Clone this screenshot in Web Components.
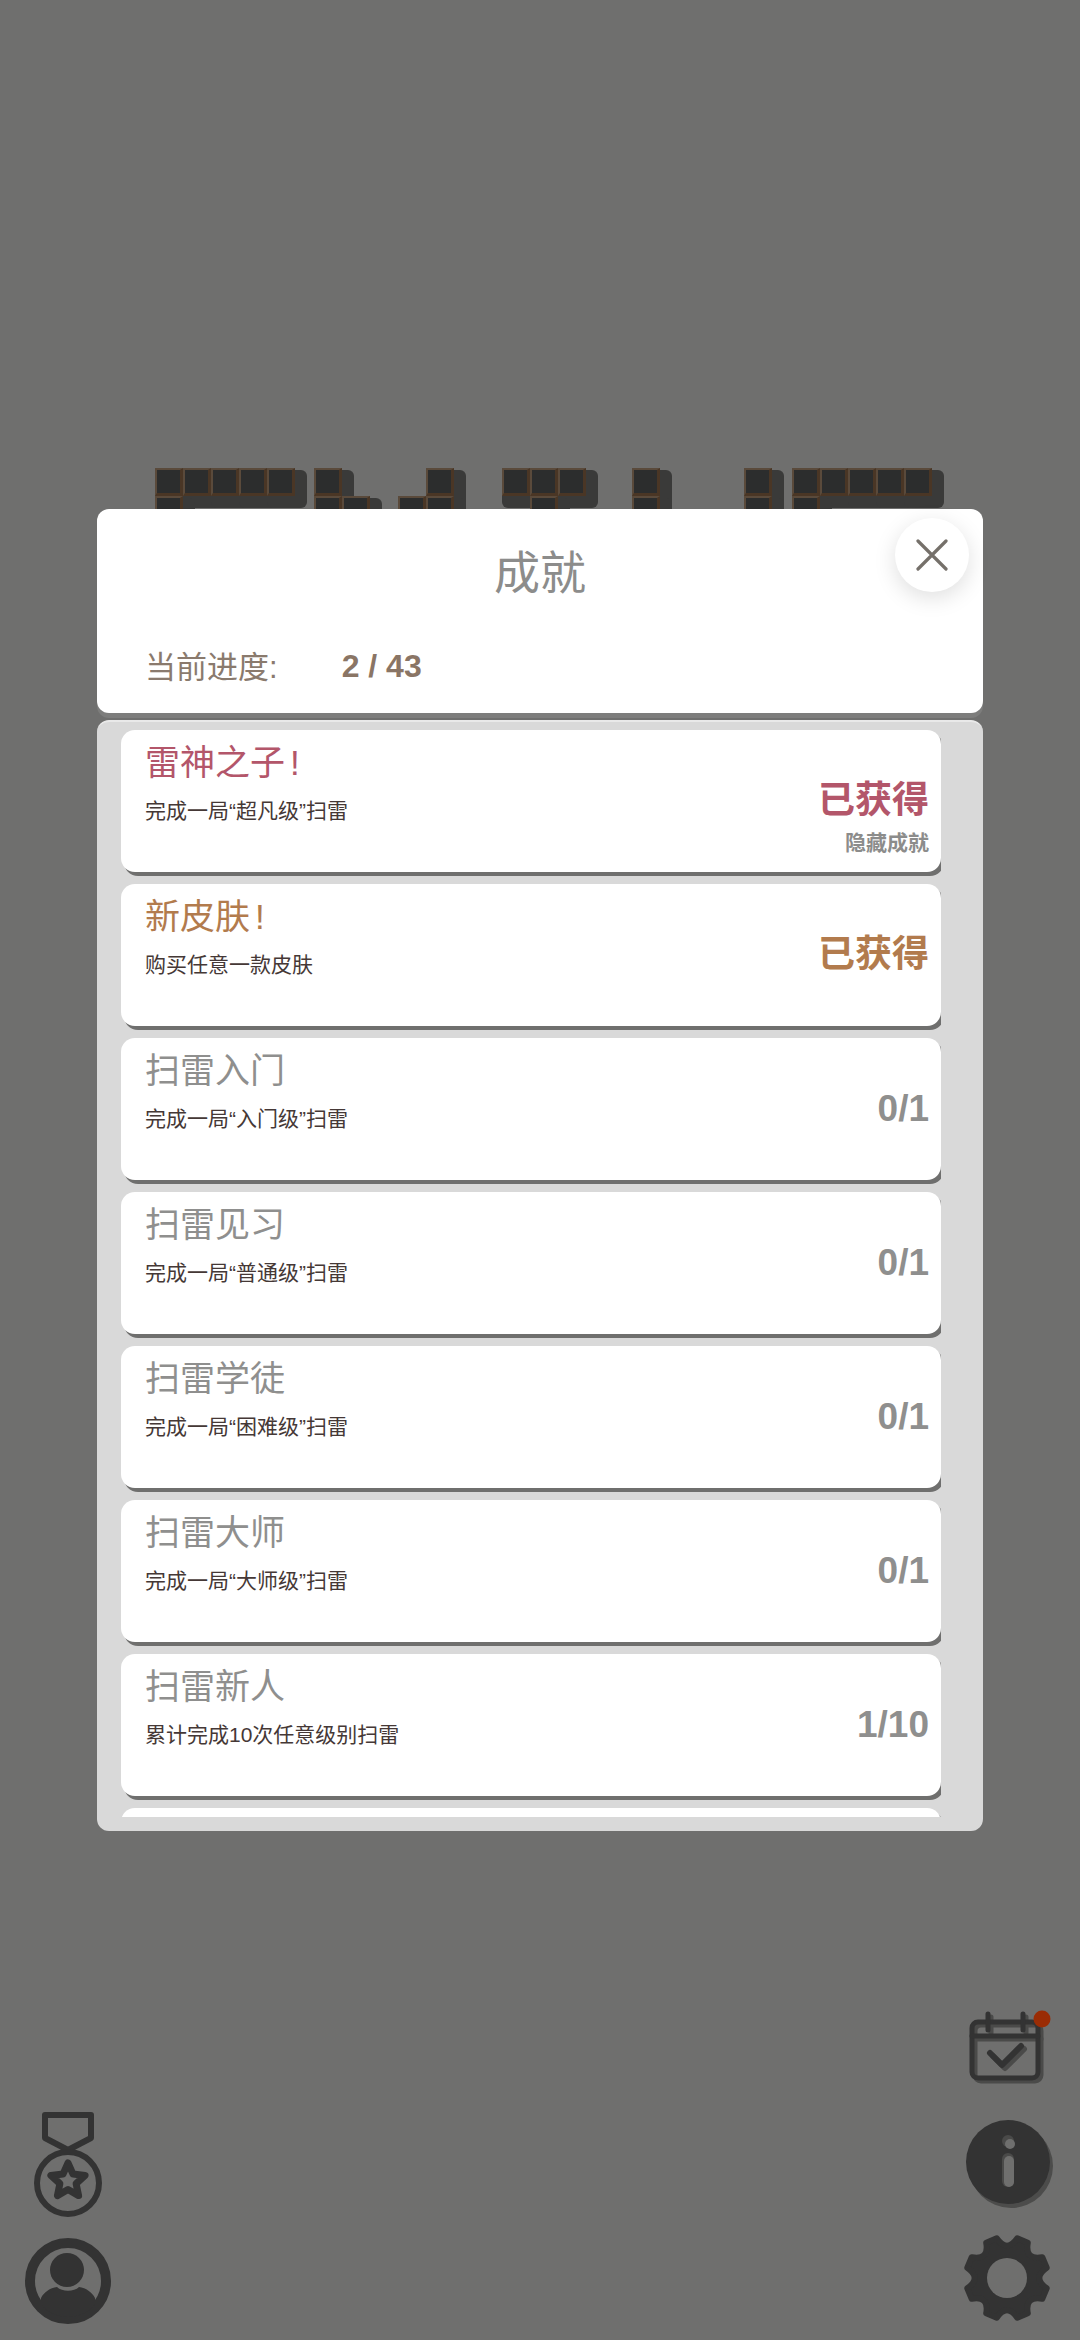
<!DOCTYPE html>
<html lang="zh">
<head>
<meta charset="utf-8">
<title>成就</title>
<style>
  html, body { margin: 0; padding: 0; background: #6f6f6e; }
  body { font-family: "Liberation Sans", "Noto Sans CJK SC", sans-serif; }
</style>
</head>
<body>
<game-screen>
  <title-blocks slot="title"></title-blocks>
  <achievement-dialog slot="dialog" current="2 / 43">
    <achievement-card tone="red" name="雷神之子!" desc="完成一局“超凡级”扫雷" status="已获得" note="隐藏成就"></achievement-card>
    <achievement-card tone="orange" name="新皮肤!" desc="购买任意一款皮肤" status="已获得"></achievement-card>
    <achievement-card name="扫雷入门" desc="完成一局“入门级”扫雷" status="0/1"></achievement-card>
    <achievement-card name="扫雷见习" desc="完成一局“普通级”扫雷" status="0/1"></achievement-card>
    <achievement-card name="扫雷学徒" desc="完成一局“困难级”扫雷" status="0/1"></achievement-card>
    <achievement-card name="扫雷大师" desc="完成一局“大师级”扫雷" status="0/1"></achievement-card>
    <achievement-card name="扫雷新人" desc="累计完成10次任意级别扫雷" status="1/10"></achievement-card>
    <achievement-card></achievement-card>
  </achievement-dialog>
  <hud-icon slot="left" name="medal"></hud-icon>
  <hud-icon slot="left" name="profile"></hud-icon>
  <hud-icon slot="right" name="calendar"></hud-icon>
  <hud-icon slot="right" name="info"></hud-icon>
  <hud-icon slot="right" name="gear"></hud-icon>
</game-screen>

<script>
/**
 * Full window screen: title at the top, HUD icons at the bottom, dialog over it
 */
class GameScreen extends HTMLElement {
  constructor() {
    super();
    this.attachShadow({ mode: 'open' });
    this.shadowRoot.innerHTML = `
      <style>
        :host {
          display: flex;
          flex-direction: column;
          justify-content: space-between;
          position: relative;
          width: 1080px;
          height: 2340px;
          overflow: hidden;
          background: #6f6f6e;
        }
        .hud {
          display: flex;
          justify-content: space-between;
          align-items: flex-end;
          padding: 0 24px 15px;
        }
        .column {
          display: flex;
          flex-direction: column;
          align-items: center;
        }
      </style>
      <slot name="title"></slot>
      <slot name="dialog"></slot>
      <div class="hud">
        <div class="column"><slot name="left"></slot></div>
        <div class="column"><slot name="right"></slot></div>
      </div>
    `;
  }
}

// Left edge of each block group, and the cells as [col, row]
const TITLE_GROUPS = [
  { x: 155, cells: [[0, 0], [1, 0], [2, 0], [3, 0], [4, 0], [0, 1]] },
  { x: 314, cells: [[0, 0], [0, 1], [1, 1]] },
  { x: 398, cells: [[1, 0], [0, 1], [1, 1]] },
  { x: 502, cells: [[0, 0], [1, 0], [2, 0], [1, 1]] },
  { x: 632, cells: [[0, 0], [0, 1]] },
  { x: 744, cells: [[0, 0], [0, 1]] },
  { x: 792, cells: [[0, 0], [1, 0], [2, 0], [3, 0], [4, 0], [0, 1]] },
];

/**
 * The block letters of the game title, mostly hidden behind the dialog
 */
class TitleBlocks extends HTMLElement {
  constructor() {
    super();
    this.attachShadow({ mode: 'open' });
    let shadows = '';
    let cells = '';
    for (const group of TITLE_GROUPS) {
      for (const [col, row] of group.cells) {
        const left = group.x + col * 28;
        const top = row * 28;
        shadows += `<i class="shade" style="left:${left}px;top:${top + 2}px"></i>`;
        cells += `<i class="cell" style="left:${left}px;top:${top}px"></i>`;
      }
    }
    this.shadowRoot.innerHTML = `
      <style>
        :host {
          display: block;
          position: relative;
          height: 80px;
          margin-top: 468px;
        }
        i { position: absolute; display: block; box-sizing: border-box; }
        .shade {
          width: 40px;
          height: 38px;
          border-radius: 6px;
          background: #3a3a39;
        }
        .cell {
          width: 28px;
          height: 28px;
          background: #2c2d2d;
          border-style: solid;
          border-width: 2px 3px 3px 2px;
          border-color: #5a4a3b #4a3625 #4a3625 #5a4a3b;
        }
      </style>
      ${shadows}${cells}
    `;
  }
}

/**
 * Achievements dialog, the cards are passed through the default slot
 */
class AchievementDialog extends HTMLElement {
  constructor() {
    super();
    this.attachShadow({ mode: 'open' });
    const current = this.getAttribute('current') || '';
    this.shadowRoot.innerHTML = `
      <style>
        :host {
          display: flex;
          flex-direction: column;
          position: absolute;
          left: 97px;
          top: 509px;
          width: 886px;
          height: 1322px;
        }
        .head {
          position: relative;
          box-sizing: border-box;
          height: 204px;
          flex: none;
          background: #fff;
          border-radius: 12px;
          box-shadow: 0 5px 0 #7d7d7c;
        }
        h1 {
          margin: 0;
          padding-top: 29px;
          text-align: center;
          font-size: 46px;
          line-height: 70px;
          font-weight: 400;
          color: #8c8c8b;
        }
        .progress {
          display: flex;
          align-items: center;
          margin-top: 32px;
          padding-left: 48px;
          height: 44px;
          color: #8a7a6d;
          font-size: 31px;
        }
        .progress span { margin-top: 4px; }
        .progress b { margin-left: 64px; margin-top: 8px; font-size: 32px; color: #8a7565; }
        .close {
          position: absolute;
          right: 14px;
          top: 9px;
          width: 74px;
          height: 74px;
          border-radius: 50%;
          background: #fff;
          box-shadow: 0 6px 22px rgba(0, 0, 0, 0.13);
          display: flex;
          align-items: center;
          justify-content: center;
        }
        .panel {
          flex: 1;
          min-height: 0;
          margin-top: 7px;
          box-sizing: border-box;
          padding: 8px 42px 14px 24px;
          background: #d9d9d9;
          border-top: 2px solid #e9e9e9;
          border-radius: 12px;
        }
        .list {
          display: flex;
          flex-direction: column;
          gap: 12px;
          height: 100%;
          overflow: hidden;
        }
      </style>
      <div class="head">
        <h1>成就</h1>
        <div class="progress"><span>当前进度:</span><b>${current}</b></div>
        <div class="close">
          <svg width="32" height="32" viewBox="0 0 32 32" fill="none" stroke="#75706a" stroke-width="3.2" stroke-linecap="round">
            <path d="M2 2 L30 30 M30 2 L2 30"/>
          </svg>
        </div>
      </div>
      <div class="panel"><div class="list"><slot></slot></div></div>
    `;
  }
}

const CARD_TONES = {
  red: '#b3566a',
  orange: '#b27b4d',
  gray: '#8f8f8e',
};

/**
 * One row of the achievements list
 */
class AchievementCard extends HTMLElement {
  constructor() {
    super();
    this.attachShadow({ mode: 'open' });
    const tone = CARD_TONES[this.getAttribute('tone')] || CARD_TONES.gray;
    // The exclamation mark sits a little away from the last character
    const name = (this.getAttribute('name') || '').replace('!', '<span class="bang">!</span>');
    const desc = this.getAttribute('desc') || '';
    const status = this.getAttribute('status') || '';
    const note = this.getAttribute('note');
    this.shadowRoot.innerHTML = `
      <style>
        :host {
          display: flex;
          flex: none;
          align-items: center;
          justify-content: space-between;
          position: relative;
          box-sizing: border-box;
          width: 820px;
          height: 142px;
          padding: 0 12px 0 24px;
          background: #fff;
          border-radius: 14px;
          box-shadow: 3px 4px 0 #6f6f6e;
        }
        .main { align-self: flex-start; padding-top: 8px; }
        .name { font-size: 35px; line-height: 50px; color: ${tone}; }
        .bang { margin-left: 5px; }
        .desc { margin-top: 7px; font-size: 21px; line-height: 32px; color: #453836; }
        .status { font-size: 37px; line-height: 50px; font-weight: 700; color: ${tone}; }
        .note {
          position: absolute;
          right: 12px;
          top: 99px;
          font-size: 21px;
          line-height: 28px;
          font-weight: 700;
          color: #8c8c8b;
        }
      </style>
      <div class="main">
        <div class="name">${name}</div>
        <div class="desc">${desc}</div>
      </div>
      <div class="status">${status}</div>
      ${note ? `<div class="note">${note}</div>` : ''}
    `;
  }
}

/**
 * Star outline points for the medal icon
 * @param {number} cx - centre x
 * @param {number} cy - centre y
 * @param {number} outer - tip radius
 * @param {number} inner - notch radius
 * @returns {string} points attribute
 */
function starPoints(cx, cy, outer, inner) {
  const points = [];
  for (let i = 0; i < 10; i++) {
    const radius = i % 2 ? inner : outer;
    const angle = (Math.PI / 5) * i - Math.PI / 2;
    points.push(`${(cx + radius * Math.cos(angle)).toFixed(1)},${(cy + radius * Math.sin(angle)).toFixed(1)}`);
  }
  return points.join(' ');
}

/**
 * Gear outline with eight teeth and scalloped valleys
 * @param {number} cx - centre x of the viewBox
 * @param {number} cy - centre y of the viewBox
 * @returns {string} path data
 */
function gearPath(cx, cy) {
  const at = (radius, deg) => {
    const rad = (deg * Math.PI) / 180;
    return `${(cx + radius * Math.cos(rad)).toFixed(1)} ${(cy + radius * Math.sin(rad)).toFixed(1)}`;
  };
  let d = '';
  for (let i = 0; i < 8; i++) {
    const a = 22.5 + i * 45 - 90;
    d += `${i ? 'L' : 'M'}${at(41, a - 8)} L${at(41, a + 8)} Q${at(25, a + 22.5)} ${at(41, a + 37)} `;
  }
  return d + 'Z';
}

const CALENDAR_MARK = `
  <rect x="12" y="14" width="66" height="56" rx="6"/>
  <path d="M12 28 H78 M28 6 V22 M63 6 V22"/>
  <path d="M30 45 L42 57 L61 38" stroke-width="6"/>
`;

const HUD_ICONS = {
  medal: `
    <svg width="68" height="106" viewBox="0 0 68 106" fill="none" stroke="#333" stroke-width="6" stroke-linejoin="round" style="margin-bottom:19px">
      <path d="M11 3 H57 V26 L34 38 L11 26 Z"/>
      <circle cx="34" cy="71" r="31"/>
      <polygon points="${starPoints(34, 69, 18, 8.5)}" stroke-width="7"/>
    </svg>`,
  profile: `
    <svg width="88" height="88" viewBox="0 0 88 88">
      <defs><clipPath id="face"><circle cx="44" cy="44" r="36"/></clipPath></defs>
      <circle cx="44" cy="44" r="38" fill="none" stroke="#333" stroke-width="10"/>
      <circle cx="43" cy="33" r="17" fill="#333"/>
      <path clip-path="url(#face)" fill="#333" d="M17 61 C20 55 26 51 33 50 C38 55 50 55 55 50 C62 51 68 55 71 61 L71 84 H17 Z"/>
    </svg>`,
  calendar: `
    <svg width="96" height="84" viewBox="0 0 96 84" fill="none" stroke-linecap="round" stroke-linejoin="round" stroke-width="5" style="margin-bottom:22px">
      <g stroke="#4a4a49" transform="translate(3 3)">${CALENDAR_MARK}</g>
      <g stroke="#333">${CALENDAR_MARK}</g>
      <circle cx="82" cy="11" r="8.5" fill="#9a2c05"/>
    </svg>`,
  info: `
    <svg width="96" height="96" viewBox="0 0 96 96" style="margin-bottom:22px">
      <circle cx="51" cy="52" r="42" fill="#4c4c4b"/>
      <circle cx="48" cy="48" r="42" fill="#333"/>
      <g fill="#4a4a49"><circle cx="48" cy="27" r="6"/><rect x="42" y="39" width="12" height="34" rx="6"/></g>
      <g fill="#6f6f6e"><circle cx="50" cy="30" r="5"/><rect x="44" y="42" width="10" height="31" rx="5"/></g>
    </svg>`,
  gear: `
    <svg width="96" height="92" viewBox="0 0 96 92" style="margin-bottom:1px">
      <path fill="#333" stroke="#333" stroke-width="6" stroke-linejoin="round" d="${gearPath(47, 46)}"/>
      <circle cx="47" cy="46" r="20" fill="#6f6f6e"/>
    </svg>`,
};

/**
 * Dark icon of the game HUD, picked by its name attribute
 */
class HudIcon extends HTMLElement {
  constructor() {
    super();
    this.attachShadow({ mode: 'open' });
    this.shadowRoot.innerHTML = `
      <style>
        :host { display: block; line-height: 0; }
        svg { display: block; }
      </style>
      ${HUD_ICONS[this.getAttribute('name')] || ''}
    `;
  }
}

customElements.define('hud-icon', HudIcon);
customElements.define('achievement-card', AchievementCard);
customElements.define('achievement-dialog', AchievementDialog);
customElements.define('title-blocks', TitleBlocks);
customElements.define('game-screen', GameScreen);
</script>
</body>
</html>
